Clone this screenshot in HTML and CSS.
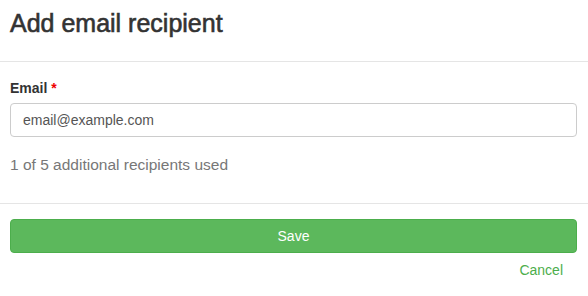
FILE: index.html
```html
<!DOCTYPE html>
<html lang="en">
<head>
    <meta charset="UTF-8">
    <title>Add email recipient</title>
    <link rel="stylesheet" href="styles.css">
</head>
<body>
    <div class="modal">
        <div class="modal-header">
            <h3 class="modal-title">Add email recipient</h3>
        </div>
        <div class="modal-body">
            <div class="form-group">
                <label for="email">Email <span class="required">*</span></label>
                <input type="email" id="email" name="email" class="form-control" value="email@example.com">
            </div>
            <p class="help-text">1 of 5 additional recipients used</p>
        </div>
        <div class="modal-footer">
            <button type="button" class="btn btn-success">Save</button>
            <a href="#" class="cancel-link">Cancel</a>
        </div>
    </div>
</body>
</html>
```

FILE: styles.css
```css
* { margin: 0; padding: 0; box-sizing: border-box; }
body {
    font-family: "Liberation Sans", Arial, Helvetica, sans-serif;
    background-color: #fff;
    color: #333;
}
.modal {
    width: 100%;
}
.modal-header {
    padding: 10px 10px 23px;
    border-bottom: 1px solid #e5e5e5;
}
.modal-title {
    font-size: 25px;
    font-weight: normal;
    line-height: 27.5px;
    color: #333;
    -webkit-text-stroke: 0.6px #333;
}
.modal-body {
    padding: 16px 11px 27px 10px;
}
.form-group label {
    display: block;
    font-size: 14px;
    font-weight: bold;
    line-height: 20px;
    margin-bottom: 5px;
    color: #333;
}
.required {
    color: #e00;
}
.form-control {
    display: block;
    width: 100%;
    height: 34px;
    padding: 6px 12px;
    font-family: inherit;
    font-size: 14px;
    color: #555;
    border: 1px solid #ccc;
    border-radius: 4px;
    background-color: #fff;
}
.help-text {
    margin-top: 17px;
    font-size: 15.5px;
    line-height: 22px;
    color: #777;
}
.modal-footer {
    display: flex;
    flex-direction: column;
    align-items: flex-end;
    padding: 15px 11px 15px 10px;
    border-top: 1px solid #e5e5e5;
}
.btn {
    width: 100%;
    height: 34px;
    font-family: inherit;
    font-size: 14px;
    border-radius: 4px;
    cursor: pointer;
}
.btn-success {
    background-color: #5cb85c;
    border: 1px solid #4cae4c;
    color: #fff;
}
.cancel-link {
    margin-top: 7px;
    margin-right: 14px;
    font-size: 14px;
    line-height: 20px;
    color: #4cae4c;
    text-decoration: none;
}
```
